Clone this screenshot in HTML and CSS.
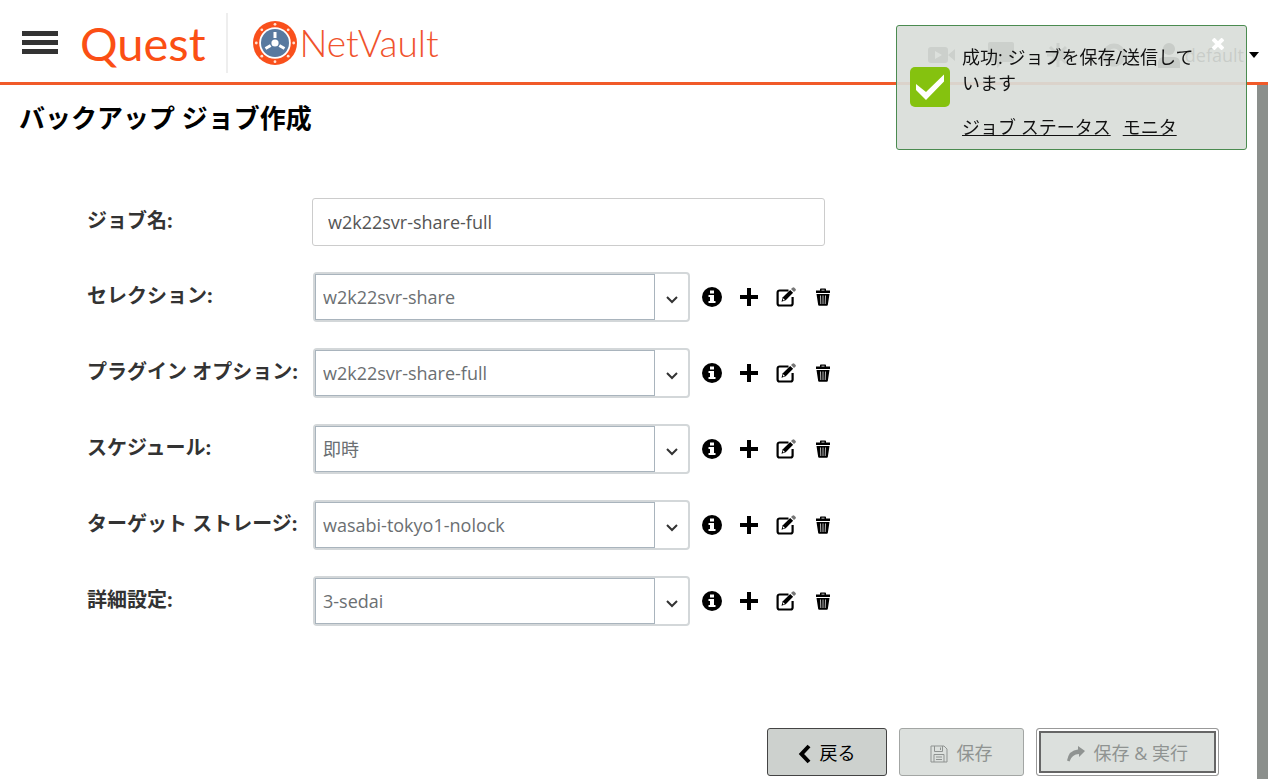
FILE: index.html
```
<!DOCTYPE html>
<html lang="ja">
<head>
    <meta charset="UTF-8">
    <meta name="viewport" content="width=device-width, initial-scale=1.0">
    <title>NetVault - バックアップ ジョブ作成</title>
    <link rel="stylesheet" href="styles.css">
</head>
<body>
    <!-- Icon sprite -->
    <svg class="sprite" aria-hidden="true">
        <symbol id="icon-info" viewBox="0 0 20 20">
            <circle cx="10" cy="10" r="10"/>
            <path fill="#fff" d="M8 3.500h4v3H8zM6.500 8H12v6h1.500v2h-7v-2H8v-4H6.500z"/>
        </symbol>
        <symbol id="icon-plus" viewBox="0 0 20 20">
            <path d="M8 1h4v7h7v4h-7v7H8v-7H1V8h7z"/>
        </symbol>
        <symbol id="icon-edit" viewBox="0 0 20 20">
            <path fill="none" stroke="currentColor" stroke-width="2.200" d="M12.500 3.500H3.600a2 2 0 0 0-2 2v11a2 2 0 0 0 2 2h11a2 2 0 0 0 2-2V10"/>
            <path d="M5.500 14.800l1.300-4.500 7.400-7.400 2.900 2.900-7.400 7.500z"/>
            <path fill="#777" d="M15 2.100l1.400-1.400a1.400 1.400 0 0 1 2 0l1 1a1.400 1.400 0 0 1 0 2L18 5.100z"/>
            <path fill="#fff" d="M7.300 11.300l1.600 1.600-1.500.5-.5-.6z"/>
        </symbol>
        <symbol id="icon-trash" viewBox="0 0 16 18">
            <path d="M5 2.500V1.300Q5 .5 5.800.5h4.400q.8 0 .8.800v1.200h4V5H1V2.500zM6.500 2.500h3V1.700h-3zM1.500 6h13l-1.700 11q-.1.800-1 .8H4.200q-.9 0-1-.8z"/>
            <path stroke="#bbb" d="M5.500 7.500l.3 8.500M8 7.500V16M10.500 7.500l-.3 8.500"/>
        </symbol>
    </svg>

    <header class="header">
        <button class="menu-button" type="button" aria-label="メニュー">
            <span></span><span></span><span></span>
        </button>
        <div class="logo-quest">Quest</div>
        <div class="logo-netvault">
            <svg class="vault-icon" viewBox="0 0 44 44" aria-hidden="true">
                <circle cx="22" cy="22" r="22" fill="#f9501c"/>
                <circle cx="22" cy="22" r="15.800" fill="#fff"/>
                <circle cx="22" cy="22" r="14" fill="#58799f"/>
                <g fill="#ffe3d6">
                    <circle cx="22" cy="3.300" r="1.400"/><circle cx="22" cy="40.700" r="1.400"/>
                    <circle cx="3.300" cy="22" r="1.400"/><circle cx="40.700" cy="22" r="1.400"/>
                    <circle cx="8.800" cy="8.800" r="1.400"/><circle cx="35.200" cy="8.800" r="1.400"/>
                    <circle cx="8.800" cy="35.200" r="1.400"/><circle cx="35.200" cy="35.200" r="1.400"/>
                </g>
                <circle cx="22" cy="22" r="3.600" fill="#fff"/>
                <path stroke="#fff" stroke-width="3" d="M22 11v6M12.500 27.500l5.200-3M31.500 27.500l-5.200-3"/>
            </svg>
            <span>NetVault</span>
        </div>
        <nav class="header-tools">
            <svg width="28" height="20" viewBox="0 0 28 20"><path d="M3 2h14q3 0 3 3v10q0 3-3 3H3q-3 0-3-3V5q0-3 3-3zM20 10l7-6v12z"/><path fill="#fff" d="M7 6l7 4-7 4z"/></svg>
            <svg width="26" height="26" viewBox="0 0 26 26"><path d="M2 0h22q2 0 2 2v16q0 2-2 2h-9l-6 6v-6H2q-2 0-2-2V2q0-2 2-2z"/></svg>
            <svg width="24" height="26" viewBox="0 0 24 26"><circle cx="12" cy="13" r="6"/><path stroke="currentColor" stroke-width="3" d="M12 1v24M1 13h22M4 5l16 16M20 5L4 21"/></svg>
            <svg width="24" height="24" viewBox="0 0 24 24"><circle cx="12" cy="12" r="9" fill="none" stroke="currentColor" stroke-width="5"/></svg>
            <a class="user" href="#">
                <svg width="22" height="26" viewBox="0 0 22 26"><circle cx="11" cy="7" r="6"/><path d="M0 26v-5q0-6 6-6h10q6 0 6 6v5z"/></svg>
                default
                <svg width="10" height="6" viewBox="0 0 10 6"><path d="M0 0h10L5 6z"/></svg>
            </a>
        </nav>
    </header>

    <div class="page">
        <main class="content">
            <h1>バックアップ ジョブ作成</h1>

            <form class="job-form">
                <div class="form-row">
                    <label for="jobName">ジョブ名:</label>
                    <input id="jobName" class="text-input" type="text" value="w2k22svr-share-full">
                </div>
                <div class="form-row">
                    <label for="selection">セレクション:</label>
                    <div class="combo">
                        <select id="selection"><option>w2k22svr-share</option></select>
                        <svg viewBox="0 0 12 8"><path d="M1 1l5 5 5-5"/></svg>
                    </div>
                    <div class="actions">
                        <button type="button" aria-label="情報"><svg><use href="#icon-info"/></svg></button>
                        <button type="button" aria-label="追加"><svg><use href="#icon-plus"/></svg></button>
                        <button type="button" aria-label="編集"><svg><use href="#icon-edit"/></svg></button>
                        <button type="button" aria-label="削除"><svg class="trash"><use href="#icon-trash"/></svg></button>
                    </div>
                </div>
                <div class="form-row">
                    <label for="plugin">プラグイン オプション:</label>
                    <div class="combo">
                        <select id="plugin"><option>w2k22svr-share-full</option></select>
                        <svg viewBox="0 0 12 8"><path d="M1 1l5 5 5-5"/></svg>
                    </div>
                    <div class="actions">
                        <button type="button" aria-label="情報"><svg><use href="#icon-info"/></svg></button>
                        <button type="button" aria-label="追加"><svg><use href="#icon-plus"/></svg></button>
                        <button type="button" aria-label="編集"><svg><use href="#icon-edit"/></svg></button>
                        <button type="button" aria-label="削除"><svg class="trash"><use href="#icon-trash"/></svg></button>
                    </div>
                </div>
                <div class="form-row">
                    <label for="schedule">スケジュール:</label>
                    <div class="combo">
                        <select id="schedule"><option>即時</option></select>
                        <svg viewBox="0 0 12 8"><path d="M1 1l5 5 5-5"/></svg>
                    </div>
                    <div class="actions">
                        <button type="button" aria-label="情報"><svg><use href="#icon-info"/></svg></button>
                        <button type="button" aria-label="追加"><svg><use href="#icon-plus"/></svg></button>
                        <button type="button" aria-label="編集"><svg><use href="#icon-edit"/></svg></button>
                        <button type="button" aria-label="削除"><svg class="trash"><use href="#icon-trash"/></svg></button>
                    </div>
                </div>
                <div class="form-row">
                    <label for="storage">ターゲット ストレージ:</label>
                    <div class="combo">
                        <select id="storage"><option>wasabi-tokyo1-nolock</option></select>
                        <svg viewBox="0 0 12 8"><path d="M1 1l5 5 5-5"/></svg>
                    </div>
                    <div class="actions">
                        <button type="button" aria-label="情報"><svg><use href="#icon-info"/></svg></button>
                        <button type="button" aria-label="追加"><svg><use href="#icon-plus"/></svg></button>
                        <button type="button" aria-label="編集"><svg><use href="#icon-edit"/></svg></button>
                        <button type="button" aria-label="削除"><svg class="trash"><use href="#icon-trash"/></svg></button>
                    </div>
                </div>
                <div class="form-row">
                    <label for="advanced">詳細設定:</label>
                    <div class="combo">
                        <select id="advanced"><option>3-sedai</option></select>
                        <svg viewBox="0 0 12 8"><path d="M1 1l5 5 5-5"/></svg>
                    </div>
                    <div class="actions">
                        <button type="button" aria-label="情報"><svg><use href="#icon-info"/></svg></button>
                        <button type="button" aria-label="追加"><svg><use href="#icon-plus"/></svg></button>
                        <button type="button" aria-label="編集"><svg><use href="#icon-edit"/></svg></button>
                        <button type="button" aria-label="削除"><svg class="trash"><use href="#icon-trash"/></svg></button>
                    </div>
                </div>
            </form>

            <div class="button-bar">
                <button class="btn" type="button">
                    <svg width="13" height="20" viewBox="0 0 13 20"><path fill="none" stroke="currentColor" stroke-width="4" d="M11 2L3.500 10l7.500 8"/></svg>
                    戻る
                </button>
                <button class="btn" type="button" disabled>
                    <svg width="18" height="18" viewBox="0 0 18 18"><path fill="none" stroke="currentColor" d="M1 1h13l3 3v13H1zM4.500 1v5.500h8V1M10.500 2.500V5M4 17V9.500h10V17M6 12h6M6 14.500h6"/></svg>
                    保存
                </button>
                <button class="btn btn-run" type="button" disabled>
                    <svg width="18" height="16" viewBox="0 0 18 16"><path d="M11 0l7 5-6 6V8Q5 8 2.500 15.500L0 14.500Q2 4 11 3.500z"/></svg>
                    保存 &amp; 実行
                </button>
            </div>
        </main>
        <div class="scroll-track"></div>
    </div>

    <!-- Notification -->
    <div class="toast" role="status">
        <svg class="toast-check" viewBox="0 0 40 40" aria-hidden="true">
            <rect width="40" height="40" rx="5" fill="#85c20f"/>
            <path fill="#fff" d="M6 17l10 8L34 7.500v7L16 33 6 23z"/>
        </svg>
        <div class="toast-body">
            <p>成功: ジョブを保存/送信しています</p>
            <p class="toast-links"><a href="#">ジョブ ステータス</a><a href="#">モニタ</a></p>
        </div>
        <button class="toast-close" type="button" aria-label="閉じる">
            <svg viewBox="0 0 12 12"><path stroke="#fff" stroke-width="4" d="M1 1l10 10M11 1L1 11"/></svg>
        </button>
    </div>
</body>
</html>
```
FILE: styles.css
```
:root {
    --orange: #f15a29;
    --text: #333;
    --muted: #6b6f72;
    --font: "Open Sans", "Noto Sans CJK JP", sans-serif;
}

* {
    box-sizing: border-box;
}

body {
    display: flex;
    flex-direction: column;
    min-height: 100vh;
    margin: 0;
    background: #fff;
    color: var(--text);
    font-family: var(--font);
    font-size: 18px;
}

button,
input,
select {
    font: inherit;
}

.sprite {
    display: none;
}

/* Header */
.header {
    display: flex;
    align-items: center;
    height: 85px;
    padding: 3px 9px 0 22px;
    border-bottom: 3px solid var(--orange);
}

.menu-button {
    display: flex;
    flex-direction: column;
    gap: 4px;
    width: 36px;
    padding: 0;
    border: 0;
    background: none;
}

.menu-button span {
    height: 5px;
    background: #333;
}

.logo-quest {
    height: 60px;
    margin-left: 22px;
    padding-right: 20px;
    border-right: 2px solid #eee;
    color: #fb4f14;
    font-family: Lato, sans-serif;
    font-size: 47px;
    line-height: 60px;
}

.logo-netvault {
    display: flex;
    align-items: center;
    gap: 3px;
    margin-left: 25px;
    color: #f0532d;
    font-family: Lato, sans-serif;
    font-size: 37px;
    font-weight: 300;
}

.vault-icon {
    width: 44px;
    height: 44px;
}

.header-tools {
    display: flex;
    align-items: center;
    gap: 32px;
    margin: 24px 0 0 auto;
}

.header-tools svg {
    fill: currentColor;
}

.header-tools .user {
    display: flex;
    align-items: center;
    gap: 5px;
    color: #000;
    text-decoration: none;
}

/* Page */
.page {
    display: flex;
    flex: 1;
}

.content {
    display: flex;
    flex: 1;
    flex-direction: column;
    padding: 13px 38px 5px 19px;
}

.scroll-track {
    width: 11px;
    margin-bottom: 2px;
    background: #8b8f8c;
}

h1 {
    margin: 0;
    color: #000;
    font-size: 26px;
    line-height: 40px;
}

.job-form {
    display: flex;
    flex-direction: column;
    gap: 26px;
    margin-top: 60px;
    padding-left: 68px;
}

.form-row {
    display: flex;
    align-items: center;
}

.form-row label {
    flex: none;
    width: 225px;
    padding-bottom: 6px;
    font-size: 20px;
    font-weight: bold;
}

.text-input {
    width: 513px;
    height: 48px;
    padding: 0 15px;
    border: 1px solid #ccc;
    border-radius: 3px;
    color: #555;
}

.combo {
    display: flex;
    align-items: center;
    width: 377px;
    height: 50px;
    margin-left: 1px;
    border: 2px solid #d3d7d9;
    border-radius: 4px;
}

.combo select {
    flex: 1;
    height: 100%;
    padding: 0 7px;
    border: 1px solid #a9b4bd;
    appearance: none;
    background: #fff;
    color: var(--muted);
}

.combo svg {
    width: 12px;
    height: 8px;
    margin: 5px 10px 0 11px;
    fill: none;
    stroke: #333;
    stroke-width: 2;
}

.actions {
    display: flex;
    gap: 17px;
    margin-left: 12px;
}

.actions button {
    display: flex;
    align-items: center;
    justify-content: center;
    width: 20px;
    height: 20px;
    padding: 0;
    border: 0;
    background: none;
    color: #000;
}

.actions svg {
    width: 20px;
    height: 20px;
    fill: currentColor;
}

.actions .trash {
    width: 16px;
    height: 18px;
}

/* Buttons */
.button-bar {
    display: flex;
    justify-content: flex-end;
    gap: 12px;
    margin-top: auto;
    padding-top: 24px;
}

.btn {
    display: flex;
    align-items: center;
    justify-content: center;
    gap: 9px;
    height: 48px;
    padding: 0 30px;
    border: 1px solid #444;
    border-radius: 3px;
    background: #cdd1ce;
    color: #000;
}

.btn svg {
    margin-top: 4px;
    fill: currentColor;
}

.btn:disabled {
    border-color: #a3a6a4;
    background: #dce0dd;
    color: #8f9391;
}

.btn-run:disabled {
    border-color: #999;
    box-shadow: inset 0 0 0 2px #fff, inset 0 0 0 4px #666;
}

/* Toast */
.toast {
    position: fixed;
    top: 25px;
    right: 21px;
    display: flex;
    align-items: center;
    gap: 12px;
    width: 351px;
    padding: 18px 50px 9px 13px;
    border: 1px solid #4b8b50;
    border-radius: 3px;
    background: rgba(217, 221, 217, 0.92);
    color: #111;
}

.toast-check {
    flex: none;
    width: 40px;
    height: 40px;
    margin-bottom: 10px;
}

.toast p {
    margin: 0;
    line-height: 26px;
}

.toast .toast-links {
    display: flex;
    gap: 12px;
    margin-top: 18px;
}

.toast a {
    color: inherit;
}

.toast-close {
    position: absolute;
    top: 12px;
    right: 22px;
    width: 12px;
    height: 12px;
    padding: 0;
    border: 0;
    background: none;
}

.toast-close svg {
    display: block;
}
```
